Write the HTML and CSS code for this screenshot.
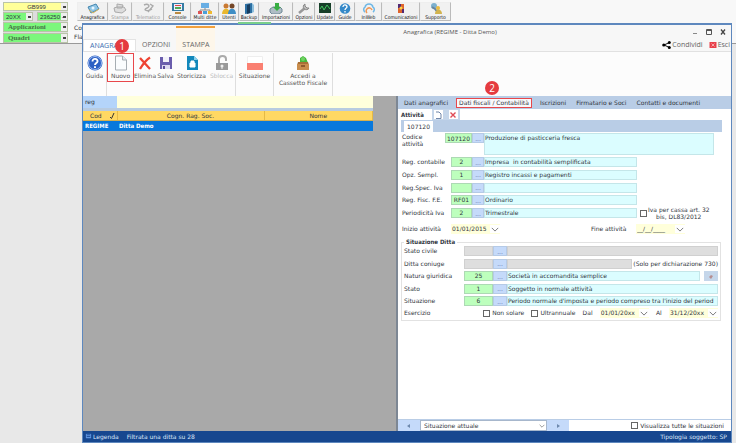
FILE: index.html
```html
<!DOCTYPE html>
<html lang="it">
<head>
<meta charset="utf-8">
<title>Anagrafica</title>
<link rel="stylesheet" href="styles.css">
</head>
<body>
<svg class="defs" aria-hidden="true">
  <symbol id="chev" viewBox="0 0 10 6"><path d="M1 1l4 4 4-4" fill="none" stroke="#777" stroke-width="1.2"/></symbol>
</svg>
<header class="desk-bar">
  <div class="company">
    <select class="combo yellow" aria-label="Codice ditta"><option>GB999</option></select>
    <div class="pair">
      <select class="combo green" aria-label="Anno"><option>20XX</option></select>
      <select class="combo green" aria-label="Periodo"><option>236250 -</option></select>
    </div>
    <select class="combo green big" aria-label="Applicazioni"><option>Applicazioni</option></select>
    <select class="combo green big" aria-label="Quadri"><option>Quadri</option></select>
  </div>
  <nav class="tools">
    <button class="w30"><svg viewBox="0 0 14 11"><path d="M2 4l8-3 3 5-8 4z" fill="#8fc5e5" stroke="#4486af"/><path d="M3 7l4 3 6-4" fill="none" stroke="#d3b35d"/><circle cx="7" cy="5" r="1.5" fill="#e9f6ff"/></svg>Anagrafica</button>
    <button class="w24 off"><svg viewBox="0 0 14 11"><path d="M4 1l6 1-1 3H4zM1 5l3-1h7l2 3-4 3-7-1z" fill="#ddd" stroke="#aaa"/></svg>Stampa</button>
    <button class="w32 off"><svg viewBox="0 0 14 11"><path d="M3 2c4-2 7 1 3 3-5 2 1 4 5 1M9 1l3 2-5 6" fill="none" stroke="#aaa" stroke-width="1.4"/></svg>Telematico</button>
    <button class="w26"><svg viewBox="0 0 14 11"><path d="M1 0h12v8H1z" fill="#357ca3"/><path d="M3 1h8v6H3z" fill="#eef"/><path d="M4 2h6v1H4z" fill="#d44"/><path d="M4 4h6v2H4z" fill="#5a5"/><path d="M4 9h6v2H4z" fill="#b98a42"/></svg>Console</button>
    <button class="w28"><svg viewBox="0 0 14 11"><path d="M3 0h8v5H3z" fill="#68aee4"/><path d="M7 5v2M2 9V7h10v2" fill="none" stroke="#888"/><path d="M0 8h4v3H0z" fill="#d55"/><path d="M5 8h4v3H5z" fill="#4a9fd8"/><path d="M10 8h4v3h-4z" fill="#efb930"/></svg>Multi ditte</button>
    <button class="w20"><svg viewBox="0 0 14 11"><circle cx="4" cy="3" r="2.5" fill="#c97932"/><circle cx="10" cy="3" r="2.5" fill="#754626"/><path d="M0 11c0-7 8-7 8 0z" fill="#e9b72d"/><path d="M6 11c0-7 8-7 8 0z" fill="#3f8ec5"/></svg>Utenti</button>
    <button class="w20"><svg viewBox="0 0 14 11"><path d="M3 1l7-1v10l-7 1z" fill="#2d70a3"/><path d="M5 2l3-1v9l-3 1z" fill="#183d5f"/><path d="M10 0l2 2v7l-2 1z" fill="#8fc0dd"/></svg>Backup</button>
    <button class="w34"><svg viewBox="0 0 14 11"><path d="M1 6l3-2h7l2 2v3l-3 2H3L1 9z" fill="#aebdc5" stroke="#6e8796"/><path d="M6 0h4v4h2L8 8 4 4h2z" fill="#38ae43"/></svg>Importazioni</button>
    <button class="w22"><svg viewBox="0 0 14 11"><path d="M2 10l6-5" stroke="#999" stroke-width="2.5"/><path d="M8 1a3 3 0 1 0 4 4l-2 0-2-2z" fill="#bbb" stroke="#888"/></svg>Opzioni</button>
    <button class="w20"><svg viewBox="0 0 14 11"><path d="M1 0h12v10H1z" fill="#173f29"/><path d="M2 6l2-3 2 4 3-5 3 4" fill="none" stroke="#43c660"/></svg>Update</button>
    <button class="w20"><svg viewBox="0 0 14 11"><circle cx="7" cy="5.5" r="5.3" fill="#3589c9"/><path d="M5 4c0-3 4-2.500 4 0 0 1-2 1-2 3M7 8v1.500" fill="none" stroke="#fff" stroke-width="1.3"/></svg>Guide</button>
    <button class="w26"><svg viewBox="0 0 14 11"><path d="M3 9a3 3 0 0 1 0-5c1-4 7-4 8 0a3 3 0 0 1 0 5" fill="none" stroke="#6eb7e5" stroke-width="1.5"/><path d="M5 10a3 3 0 1 1 5-3" fill="none" stroke="#ef9654" stroke-width="1.5"/></svg>InWeb</button>
    <button class="w38"><svg viewBox="0 0 14 11"><path d="M4 1h6v9H4z" fill="#df642b"/><path d="M4 1h3v4H4zM8 6h2v4H8z" fill="#542a73"/><circle cx="7" cy="5" r="1.500" fill="#fbd34a"/></svg>Comunicazioni</button>
    <button class="w30"><svg viewBox="0 0 14 11"><circle cx="5" cy="3" r="3" fill="#7db0ce"/><path d="M3 4l3 2 4 5" stroke="#69869b" stroke-width="2" fill="none"/><circle cx="9" cy="5" r="2" fill="#eabb42"/><path d="M6 11c0-6 7-6 7 0z" fill="#d2b34e"/></svg>Supporto</button>
  </nav>
  <div class="hidden-labels"><span>Co</span><span>Fla</span></div>
</header>

<main class="window">
  <span class="glow"></span>
  <div class="titlebar">
    <h1>Anagrafica (REGIME - Ditta Demo)</h1>
    <div class="winbtns">
      <button aria-label="Riduci"><svg viewBox="0 0 8 8"><path d="M2 5.500h4" stroke="#888"/></svg></button>
      <button aria-label="Ingrandisci"><svg viewBox="0 0 8 8"><path d="M1.500 1.500h5v5h-5zM1.500 2.500h5" fill="none" stroke="#555"/></svg></button>
      <button aria-label="Chiudi"><svg viewBox="0 0 8 8"><path d="M2 1.500l4 5M6 1.500l-4 5" stroke="#444" stroke-width="1.3"/></svg></button>
    </div>
  </div>
  <div class="menubar">
    <a class="mtab active" href="#">ANAGRA<b class="badge one">1</b></a>
    <a class="mtab" href="#">OPZIONI</a>
    <a class="mtab hot" href="#">STAMPA</a>
    <span class="grow"></span>
    <a class="act" href="#"><svg viewBox="0 0 9 8"><path d="M7.500 1.500L2 4l5.500 2.500" fill="none" stroke="#111"/><circle cx="1.800" cy="4" r="1.600"/><circle cx="7.300" cy="1.500" r="1.500"/><circle cx="7.300" cy="6.500" r="1.500"/></svg>Condividi</a>
    <a class="act" href="#"><svg viewBox="0 0 8 8"><path d="M1 1h7v6H1z" fill="#e8404a"/><path d="M3 2.500l3 3M6 2.500l-3 3" stroke="#f5a5a8"/></svg>Esci</a>
  </div>
  <div class="ribbon">
    <button class="r24 line"><svg viewBox="0 0 16 16"><circle cx="8" cy="8" r="7.500" fill="#2b5fc4"/><circle cx="8" cy="8" r="6.500" fill="none" stroke="#9fbcf0"/><path d="M5.500 6.500c0-4 5.500-3 5 0-.3 1.500-2.500 1.500-2.500 3.500M8 11.200v1.800" fill="none" stroke="#fff" stroke-width="1.900"/></svg>Guida</button>
    <button class="r27 marked"><svg viewBox="0 0 16 16"><path d="M2.500 1h7l4 4v10h-11z" fill="#fafcfd" stroke="#a6adb2"/><path d="M9.500 1v4h4" fill="#e4eaee" stroke="#a6adb2"/></svg>Nuovo</button>
    <button class="r22"><svg viewBox="0 0 16 16"><path d="M3 3l10 11M13 2.500C9 5 6 9 3 14" fill="none" stroke="#ee4332" stroke-width="2.300"/></svg>Elimina</button>
    <button class="r19"><svg viewBox="0 0 16 16"><path d="M2 2h12v12H2z" fill="#6a5dad"/><path d="M5 2h6v5H5z" fill="#f2f1fa"/><path d="M4 10h8v4H4z" fill="#dcd8f0"/><path d="M5 11h2v3H5z" fill="#594a9b"/></svg>Salva</button>
    <button class="r33"><svg viewBox="0 0 16 16"><path d="M3 1h7l4 4v10H3z" fill="#1288bb"/><path d="M10 1v4h4z" fill="#8bd0ec"/><path d="M6 8h5v4H6zM7 8V6h3v2" fill="#fff" stroke="#fff"/></svg>Storicizza</button>
    <button class="r28 off line"><svg viewBox="0 0 16 16"><path d="M5 8V4c0-4 7-4 7 0v2" fill="none" stroke="#aaa" stroke-width="2"/><path d="M2 8h12v7H2z" fill="#999"/><circle cx="8" cy="11" r="1.500" fill="#eee"/><path d="M7.500 11h1v3h-1z" fill="#eee"/></svg>Sblocca</button>
    <button class="r38 line"><svg viewBox="0 0 16 16"><path d="M.5 1.500h15v13H.5z" fill="#fff" stroke="#eee"/><path d="M0 8h16v7H0z" fill="#fa8072"/></svg>Situazione</button>
    <button class="r59 line"><svg viewBox="0 0 16 16"><path d="M5 8V3l3-2 3 2 2 5z" fill="#45b93c"/><circle cx="8" cy="4" r="2" fill="#70d263"/><path d="M3 7h10l1 3H2z" fill="#a86f35"/><path d="M2 9h12v6H2z" fill="#c98d4d"/><path d="M6 10h4v2H6z" fill="#8f592a"/></svg>Accedi a<br>Cassetto Fiscale</button>
  </div>
  <div class="panes">
    <section class="left">
      <div class="search"><label for="q">reg</label><input id="q"></div>
      <table>
        <colgroup><col class="c1"><col class="c2"><col></colgroup>
        <thead><tr><th><span class="sort">Cod<svg viewBox="0 0 6 6"><path d="M1 4l1.500 1.500L5 0" fill="none" stroke="#333"/></svg></span></th><th>Cogn. Rag. Soc.</th><th>Nome</th></tr></thead>
        <tbody><tr><td>REGIME</td><td>Ditta Demo</td><td></td></tr></tbody>
      </table>
    </section>
    <section class="right">
      <nav class="tabs">
        <a href="#">Dati anagrafici</a>
        <a href="#" class="sel">Dati fiscali / Contabilità<b class="badge two">2</b></a>
        <a href="#">Iscrizioni</a>
        <a href="#">Firmatario e Soci</a>
        <a href="#">Contatti e documenti</a>
      </nav>
      <div class="actrow"><b>Attività</b>
        <button aria-label="Nuova attività"><svg viewBox="0 0 8 8"><path d="M2 1h3l2 2v4.500H2" fill="#fff" stroke="#7187a9"/></svg></button>
        <button aria-label="Elimina attività"><svg viewBox="0 0 8 8"><path d="M1.500 1.500l5 5M6.500 1.500l-5 5" stroke="#df4b55" stroke-width="1.400"/></svg></button>
      </div>
      <div class="strip"><button>107120</button></div>
      <div class="form">
        <div class="row tall"><label for="f1">Codice attività</label><input id="f1" class="code" value="107120"><button class="dots">...</button><textarea aria-label="Descrizione attività" class="desc">Produzione di pasticceria fresca</textarea></div>
        <div class="rows">
          <div class="row"><label for="f2">Reg. contabile</label><input id="f2" class="code" value="2"><button class="dots">...</button><input class="desc" aria-label="Descrizione" value="Impresa  in contabilità semplificata"></div>
          <div class="row"><label for="f3">Opz. Sempl.</label><input id="f3" class="code" value="1"><button class="dots">...</button><input class="desc" aria-label="Descrizione" value="Registro incassi e pagamenti"></div>
          <div class="row"><label for="f4">Reg.Spec. Iva</label><input id="f4" class="code"><button class="dots">...</button><input class="desc" aria-label="Descrizione"></div>
          <div class="row"><label for="f5">Reg. Fisc. F.E.</label><input id="f5" class="code" value="RF01"><button class="dots">...</button><input class="desc" aria-label="Descrizione" value="Ordinario"></div>
          <div class="row"><label for="f6">Periodicità Iva</label><input id="f6" class="code" value="2"><button class="dots">...</button><input class="desc" aria-label="Descrizione" value="Trimestrale"><label class="check cassa"><input type="checkbox"><span>Iva per cassa art. 32<br>bis, DL83/2012</span></label></div>
        </div>
        <div class="dates">
          <label for="d1">Inizio attività</label><span class="date"><input id="d1" value="01/01/2015"><button aria-label="Apri calendario"><svg><use href="#chev"/></svg></button></span>
          <label for="d2" class="end">Fine attività</label><span class="date"><input id="d2" value="__/__/____"><button aria-label="Apri calendario"><svg><use href="#chev"/></svg></button></span>
        </div>
      </div>
      <fieldset>
        <legend>Situazione Ditta</legend>
        <div class="rows2">
          <div class="row grey"><label for="s1">Stato civile</label><input id="s1" class="code"><button class="dots">...</button><input class="desc" aria-label="Descrizione"></div>
          <div class="row grey"><label for="s2">Ditta coniuge</label><input id="s2" class="code"><button class="dots">...</button><input class="desc" aria-label="Descrizione"><span class="note">(Solo per dichiarazione 730)</span></div>
          <div class="row"><label for="s3">Natura giuridica</label><input id="s3" class="code" value="25"><button class="dots">...</button><input class="desc" aria-label="Descrizione" value="Società in accomandita semplice"><button class="mini" aria-label="Dettagli"><svg viewBox="0 0 8 8"><path d="M2 5l2-2 2 1-2 3z" fill="#b68e91"/></svg></button></div>
          <div class="row"><label for="s4">Stato</label><input id="s4" class="code" value="1"><button class="dots">...</button><input class="desc" aria-label="Descrizione" value="Soggetto in normale attività"></div>
          <div class="row"><label for="s5">Situazione</label><input id="s5" class="code" value="6"><button class="dots">...</button><input class="desc" aria-label="Descrizione" value="Periodo normale d'imposta e periodo compreso tra l'inizio del period"></div>
        </div>
        <div class="esercizio">
          <span class="es">Esercizio</span>
          <label class="check"><input type="checkbox">Non solare</label>
          <label class="check"><input type="checkbox">Ultrannuale</label>
          <label for="d3">Dal</label><span class="date"><input id="d3" value="01/01/20xx"><button aria-label="Apri calendario"><svg><use href="#chev"/></svg></button></span>
          <label for="d4">Al</label><span class="date"><input id="d4" value="31/12/20xx"><button aria-label="Apri calendario"><svg><use href="#chev"/></svg></button></span>
        </div>
      </fieldset>
      <div class="pager">
        <button aria-label="Precedente"><svg viewBox="0 0 6 6"><path d="M4 1v4L1 3z" fill="#6d88ad"/></svg></button>
        <span class="pick"><select aria-label="Situazione"><option>Situazione attuale</option></select><svg><use href="#chev"/></svg></span>
        <button aria-label="Successiva"><svg viewBox="0 0 6 6"><path d="M2 1v4l3-2z" fill="#6d88ad"/></svg></button>
        <label class="check all"><input type="checkbox">Visualizza tutte le situazioni</label>
      </div>
    </section>
  </div>
  <footer><svg viewBox="0 0 8 8"><path d="M1 1h6v5H1z" fill="#5f94e0"/><path d="M2 2h4M2 4h4" stroke="#1d4d98"/></svg><span>Legenda</span><span>Filtrata una ditta su 28</span><span class="type">Tipologia soggetto: SP</span></footer>
</main>
</body>
</html>
```
FILE: styles.css
```css
* { box-sizing: border-box; }
body { margin: 0; height: 100vh; position: relative; overflow: hidden; font: 6px/8px "DejaVu Sans", sans-serif; color: #303540; background: linear-gradient(#f8f8f8 43px, #999 43px, #999 44px, #e8e8e8 44px) no-repeat 0 0 / 100% calc(100% - 5px), #fff; }
.defs { position: absolute; width: 0; height: 0; }
button, input, select, textarea { font: inherit; color: inherit; margin: 0; padding: 0; border: 0; border-radius: 0; background: none; min-width: 0; }
a { color: inherit; text-decoration: none; }

.desk-bar { display: flex; align-items: flex-start; height: 43px; padding: 2px 0 0 3px; position: relative; }
.company { width: 65px; display: grid; gap: 1px; background: #ddd; flex: none; }
.pair { display: grid; grid-template-columns: 30px 1fr; gap: 4px; }
.combo { appearance: none; width: 100%; height: 9px; padding-left: 2px; font: 6px/8px "Liberation Sans", sans-serif; border: 1px solid #b9c4a8; background: linear-gradient(#444, #444) no-repeat right 1px center / 3px 2px, linear-gradient(#eee, #eee) no-repeat right / 6px 100%, var(--c); }
.yellow { --c: #ffff99; text-align: center; }
.green { --c: #7cf77c; }
.big { height: 10px; font: bold 7px/9px "Liberation Serif", serif; color: #467346; padding-left: 4px; }
.tools { display: flex; margin-left: 9px; height: 19px; }
.tools button { display: flex; flex-direction: column; align-items: center; justify-content: space-between; border: 1px solid #bbb; border-top-color: #eee; border-left-color: #eee; background: #f1f1f1; font: 5px/6px "DejaVu Sans Condensed", sans-serif; color: #111; white-space: nowrap; flex: none; }
.tools svg { width: 14px; height: 11px; }
.tools .off { color: #999; }
.w20 { width: 20px; } .w22 { width: 22px; } .w24 { width: 24px; } .w26 { width: 27px; } .w28 { width: 28px; }
.w30 { width: 31px; } .w32 { width: 32px; } .w34 { width: 34px; } .w38 { width: 38px; }
.hidden-labels { position: absolute; left: 74px; top: 24px; display: grid; gap: 1px; }

.window { position: absolute; inset: 23px 4px 5px 82px; display: flex; flex-direction: column; background: #f7f7f7; border: 1px solid #5e88be; border-top-width: 2px; }
.glow { position: absolute; left: 155px; top: -3px; width: 33px; height: 2px; background: #79cf8a; }
.titlebar { height: 14px; display: flex; align-items: center; justify-content: flex-end; position: relative; flex: none; }
h1 { margin: 0; font: 6px/8px "Open Sans", sans-serif; position: absolute; left: 0; right: 0; text-align: center; padding-left: 86px; color: #555; }
.winbtns { display: flex; gap: 6px; padding-right: 4px; position: relative; }
.winbtns svg { width: 8px; height: 8px; display: block; }
.menubar { display: flex; height: 13px; border-bottom: 1px solid #e1e1e1; font: 7px/12px "Open Sans", sans-serif; flex: none; color: #666; }
.mtab { padding: 0 6px; position: relative; }
.mtab.active { width: 53px; color: #3d6fb0; background: #fff; border: 1px solid #e3e3e3; border-bottom: 0; }
.mtab.hot { margin: -13px 0 0; padding-top: 11px; background: #fdf6ea; border-top: 2px solid #f2a03d; z-index: 1; }
.grow { flex: 1; }
.act { display: flex; align-items: center; gap: 1px; padding: 0 1px 0 4px; }
.act svg { width: 9px; height: 8px; }
.badge { position: absolute; width: 14px; height: 14px; border-radius: 50%; background: #e53b3f; color: #fff; font: 10px/14px "Open Sans", sans-serif; text-align: center; z-index: 2; }
.one { left: 31px; top: -1px; }
.two { left: 28px; top: -18px; }

.ribbon { display: flex; height: 44px; background: #fcfcfc; padding-top: 1px; flex: none; }
.ribbon button { display: flex; flex-direction: column; align-items: center; justify-content: flex-start; gap: 1px; padding-top: 2px; white-space: nowrap; color: #555; flex: none; line-height: 7px; }
.ribbon svg { width: 16px; height: 16px; flex: none; }
.ribbon .line { border-right: 1px solid #dedede; }
.ribbon .off { color: #bbb; }
.ribbon .marked { height: 29px; border: 1px solid #e8474b; padding-top: 1px; }
.r24 { width: 24px; } .r27 { width: 27px; } .r22 { width: 22px; } .r19 { width: 19px; } .r33 { width: 33px; } .r28 { width: 28px; } .r38 { width: 38px; } .r59 { width: 59px; }

.panes { flex: 1; display: grid; grid-template-columns: 315fr 333fr; min-height: 0; }
.left { background: #a9a9a9; border-right: 2px solid #7d8794; }
.search { display: flex; height: 12px; margin-right: 23px; background: #ffffdc; line-height: 11px; }
.search label { width: 34px; background: #b4d4fa; padding-left: 2px; }
.search input { flex: 1; }
table { width: calc(100% - 23px); border-collapse: collapse; table-layout: fixed; border-top: 3px solid #b8cbe0; }
.c1 { width: 34px; } .c2 { width: 147px; }
th, td { height: 10px; padding: 0 2px; line-height: 9px; }
th { background: #ffd863; font-weight: normal; border-right: 1px solid #e5ba45; border-bottom: 1px solid #d6b04d; }
td { background: #0878dc; color: #fff; font: bold 6px/9px "DejaVu Sans Condensed", sans-serif; }
.sort { display: flex; justify-content: space-between; align-items: center; padding-left: 5px; }
.sort svg { width: 6px; height: 6px; }

.right { background: #fff; display: flex; flex-direction: column; min-width: 0; }
.tabs { display: flex; align-items: center; gap: 6px; height: 13px; padding: 0 4px; background: #b9cde6; white-space: nowrap; flex: none; }
.tabs a { padding: 0 2px; position: relative; }
.tabs .sel { background: #f8f8fb; border: 1px solid #e8474b; line-height: 8px; padding: 0 2px; }
.actrow { display: flex; align-items: center; height: 11px; padding-left: 3px; gap: 6px; background: linear-gradient(90deg, #fff 34px, #c5d6ea 34px, #c5d6ea 62px, #fff 62px); flex: none; }
.actrow b { width: 27px; font: bold 6px/8px "DejaVu Sans Condensed", sans-serif; }
.actrow button { width: 9px; height: 9px; background: #fff; }
.actrow svg { width: 8px; height: 8px; display: block; }
.strip { height: 12px; margin: 0 9px 0 3px; background: #b9cde6; display: flex; align-items: flex-end; flex: none; }
.strip button { background: #fff; height: 11px; width: 29px; margin-left: 3px; }
.form { padding: 1px 17px 0 4px; }
.row { display: grid; grid-template: 10px / 49px 21px 12px 153px auto; height: 10px; }
.row > label { line-height: 10px; white-space: nowrap; }
.row.tall { grid-template: 22px / 43px 27px 12px 1fr; height: 22px; align-items: start; }
.row.tall > label { line-height: 7px; white-space: normal; padding-right: 14px; }
.row.tall .code, .row.tall .dots { height: 10px; }
.code { background: #bdffbd; text-align: center; border: 1px solid #add9b4; width: 100%; }
.dots { background: #c5dafa; color: #57719d; border: 1px solid #b5cae6; line-height: 5px; }
.desc { background: #dbfdff; border: 1px solid #c4e6e9; width: 100%; white-space: pre; }
textarea.desc { height: 22px; resize: none; overflow: hidden; display: block; }
.rows { display: flex; flex-direction: column; justify-content: space-between; height: 61px; margin-top: 2px; }
.check { display: flex; align-items: center; gap: 2px; white-space: nowrap; }
.check input { appearance: none; width: 7px; height: 7px; border: 1px solid #666; background: #fff; flex: none; }
.row > .cassa { height: 10px; line-height: 7px; text-align: center; padding-left: 3px; gap: 1px; }
.dates { display: flex; align-items: center; height: 10px; margin-top: 6px; }
.dates > label { width: 49px; white-space: nowrap; }
.dates > .end { margin-left: auto; width: 45px; }
.dates .date:last-child { margin-right: 29px; }
.date { display: flex; align-items: center; background: #ffffdb; height: 10px; width: 49px; }
.date input { flex: 1; width: 20px; padding-left: 1px; }
.date button { width: 10px; height: 8px; background: #fff; display: grid; place-items: center; }
.date svg { width: 8px; height: 5px; }
fieldset { margin: 4px 10px 0 3px; padding: 0 2px 2px 2px; border: 1px solid #e2e2e2; min-width: 0; }
legend { font: bold 6px/8px "DejaVu Sans Condensed", sans-serif; padding: 0 2px; height: 8px; margin-left: 0; }
.rows2 { display: flex; flex-direction: column; justify-content: space-between; height: 60px; }
.rows2 .row { grid-template-columns: 60px 29px 14px minmax(0, 1fr) auto; }
.grey .code, .grey .desc { background: #dedede; border-color: #d0d0d0; }
.note { line-height: 10px; padding-left: 1px; }
.mini { width: 14px; background: #c5d6ea; margin-left: 4px; }
.mini svg { width: 8px; height: 8px; display: block; margin: auto; }
.esercizio { display: flex; align-items: center; justify-content: space-between; height: 10px; margin-top: 2px; }
.es { width: 72px; }
.pager { display: flex; height: 12px; margin-top: auto; border-top: 1px solid #b9cde6; }
.pager button { width: 22px; background: #c5dafa; display: grid; place-items: center; }
.pager svg { width: 6px; height: 6px; }
.pick { position: relative; width: 127px; border: 1px solid #a7b7cc; display: flex; }
.pick select { appearance: none; width: 100%; padding-left: 3px; }
.pick svg { position: absolute; right: 1px; top: 2px; }
.all { margin-left: auto; padding-right: 7px; }
footer { display: flex; align-items: center; height: 11px; background: #17478f; color: #dbe6f8; gap: 8px; padding: 0 4px 0 2px; flex: none; }
footer svg { width: 7px; height: 7px; margin-right: -7px; }
.type { margin-left: auto; }
```
